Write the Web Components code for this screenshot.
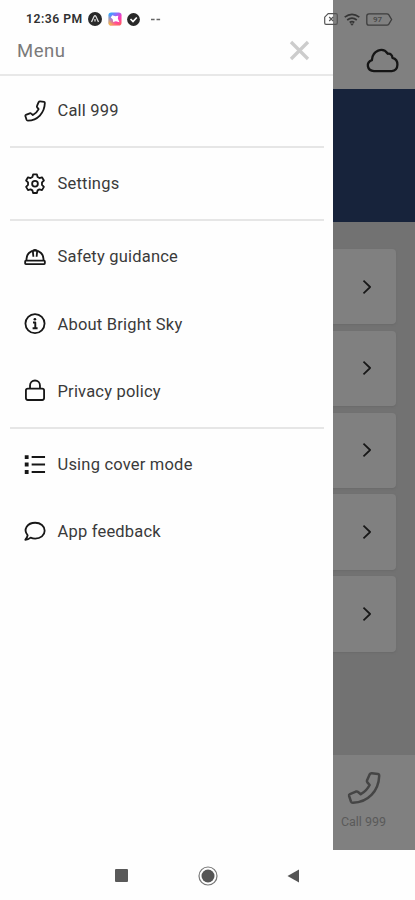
<!DOCTYPE html>
<html lang="en"><head><meta charset="utf-8"><title>Menu</title>
<style>body{margin:0;width:415px;height:900px;overflow:hidden;background:#fefefe;font-family:Roboto,sans-serif;color:#3a3a3a}</style></head>
<body><app-shell></app-shell>
<script>
const define=(name,html)=>customElements.define(name,class extends HTMLElement{
  constructor(){super();this.attachShadow({mode:'open'}).innerHTML=html}
});
const ICONS={
 phone:'<path d="M16.800 1.500 L21 2 Q21.900 2.200 21.800 3.200 C21.400 13.700 14.200 21.300 4 21.500 Q3 21.500 2.700 20.700 L1.400 16.800 Q1.200 16 2 15.600 L6 13.900 Q6.900 13.600 7.500 14.200 L9.300 15.700 Q13.300 13.500 15.300 9.500 L13.800 7.700 Q13.200 7 13.600 6.200 L15.300 2.300 Q15.800 1.400 16.800 1.500Z"/>',
 gear:'<path d="M9.5 1.500h4l.7 2.700 1.900 1.100 2.700-.8 2 3.400-2 2v2.600l2 2-2 3.400-2.700-.8-1.900 1.100-.7 2.700h-4l-.7-2.700-1.900-1.100-2.700.8-2-3.400 2-2v-2.600l-2-2 2-3.400 2.700.8 1.900-1.100z"/><circle cx="11.500" cy="11.200" r="3"/>',
 helmet:'<path d="M2.600 15.200v-1.600a8.900 8.900 0 0 1 17.800 0v1.600M9.200 5l.6 6.200M13.800 5l-.6 6.200M9.200 4.900q2.300-1.400 4.600 0"/><rect x="1.200" y="15.300" width="20.600" height="3.600" rx=".8"/>',
 info:'<circle cx="11.5" cy="11.1" r="10"/><path stroke-width="2" d="M9.400 9.900h2.400v6M9 15.900h5.200"/><circle cx="11.400" cy="6.500" r="1.400" fill="currentColor" stroke="none"/>',
 lock:'<rect x="2" y="9" width="19" height="11.9" rx="2"/><path d="M6.300 8.700V5.700a5.200 5.200 0 0 1 10.400 0v3"/>',
 list:'<path stroke-width="2" d="M8 3.200h14M8 11h14M8 18.800h14"/><path fill="currentColor" stroke="none" d="M.8 1.300h4v4h-4zM.8 9h4v4h-4zM.8 16.800h4v4h-4z"/>',
 chat:'<path d="M3.800 14.900C-1.300 8.800 3.600 1.800 11.700 1.800c5.600 0 9.900 3.500 9.900 8.300s-4.300 8.300-9.900 8.300c-1.800 0-3.400-.4-4.800-1C5.400 18.700 3.700 19.600 1.400 19.600 2.700 18.300 3.500 16.600 3.800 14.900Z"/>',
 cloud:'<path d="M5.600 18.900C.5 18.600-.2 12.800 4.100 11.200 4.500 4.700 11.600 1.700 15.200 6.800c1.800-.3 3.200.8 3.200 2.800C23.200 10.700 23.100 18.400 17.900 18.900Z"/>',
 chevron:'<path d="M7 3.500l8.500 8-8.500 8"/>',
 close:'<path d="M3 3l17 17M20 3L3 20"/>'
};
customElements.define('line-icon',class extends HTMLElement{
  constructor(){super();this.attachShadow({mode:'open'})}
  connectedCallback(){this.shadowRoot.innerHTML=`<style>:host{display:block;flex:none;width:24px;height:24px}svg{display:block;width:100%;height:100%;overflow:visible}</style>
  <svg viewBox="0 0 23 23" fill="none" stroke="currentColor" stroke-width="${this.getAttribute('weight')||1.9}" stroke-linejoin="round">${ICONS[this.getAttribute('name')]}</svg>`}
});
customElements.define('menu-item',class extends HTMLElement{
  constructor(){super();this.attachShadow({mode:'open'})}
  connectedCallback(){this.shadowRoot.innerHTML=`<style>:host{display:flex;align-items:center;height:67.200px;padding-left:23.500px;gap:12px;font-size:16.500px;letter-spacing:.2px;white-space:nowrap}
  line-icon{width:22px;height:22px;color:#171717}</style><line-icon name="${this.getAttribute('icon')}"></line-icon><span><slot></slot></span>`}
});
define('menu-group',`<style>:host{display:block;padding:2px 0}:host(:not(:last-child))::after{content:"";display:block;height:2px;margin:2px 9px 0 10px;background:#e6e6e6}</style><slot></slot>`);
define('menu-drawer',`<style>:host{display:block;width:332.500px;background:#fefefe}
 header{box-sizing:border-box;height:76px;border-bottom:2px solid #e8e8e8;display:flex;align-items:flex-end;justify-content:space-between;padding:0 22px 12px 17px;font-size:18.500px;letter-spacing:.5px;color:#7a7a7a}
 header span{margin-bottom:.5px}
 header line-icon{color:#ccc;width:23px;height:23px}
 menu-group{padding:2px 0 0}menu-group:first-of-type{padding-top:1px}</style>
 <header><span>Menu</span><line-icon name="close" weight="3.3"></line-icon></header>
 <menu-group><menu-item icon="phone">Call 999</menu-item></menu-group>
 <menu-group><menu-item icon="gear">Settings</menu-item></menu-group>
 <menu-group><menu-item icon="helmet">Safety guidance</menu-item><menu-item icon="info">About Bright Sky</menu-item><menu-item icon="lock">Privacy policy</menu-item></menu-group>
 <menu-group><menu-item icon="list">Using cover mode</menu-item><menu-item icon="chat">App feedback</menu-item></menu-group>`);
define('link-card',`<style>:host{display:flex;align-items:center;justify-content:flex-end;height:75.500px;box-sizing:border-box;padding-right:20.500px;background:#808080;border-radius:0 4px 4px 0;box-shadow:0 1px 2px #6a6a6a;color:#171717}line-icon{width:18px;height:18px}</style><line-icon name="chevron" weight="2.2"></line-icon>`);
define('dimmed-page',`<style>:host{display:flex;flex-direction:column;flex:1;background:#727272;overflow:hidden}
 .top{box-sizing:border-box;height:89px;background:#808080;padding:44px 0 0 33.500px;color:#151515}.top line-icon{width:33px;height:33px}
 .hero{height:133px;background:#17233b}
 .cards{flex:1;display:flex;flex-direction:column;gap:6.400px;padding:26.800px 19px 0 0}
 .tab{box-sizing:border-box;height:95px;background:#808080;width:82px;display:flex;flex-direction:column;align-items:center;padding:16px 20px 0 0;gap:9px;font-size:12.500px;line-height:16px;color:#5a5a5a;white-space:nowrap}.tab line-icon{width:34px;height:34px;color:#454545}</style>
 <div class="top"><line-icon name="cloud" weight="1.600"></line-icon></div><div class="hero"></div>
 <div class="cards"><link-card></link-card><link-card></link-card><link-card></link-card><link-card></link-card><link-card></link-card></div>
 <div class="tab"><line-icon name="phone" weight="1.700"></line-icon><span>Call 999</span></div>`);
define('status-bar',`<style>:host{display:flex;align-items:center;box-sizing:border-box;width:415px;height:38px;padding:0 22px 0 26px;font-size:12.200px;font-weight:600;letter-spacing:.5px;color:#303030}
 svg{display:block;flex:none}.left{display:flex;align-items:center;gap:5.500px;flex:1}.right{display:flex;align-items:center;gap:6px}.bat{display:grid;color:#4a4a4a}.bat>*{grid-area:1/1}.bat span{font-size:8px;line-height:13px;padding-left:7px;letter-spacing:0}</style>
 <div class="left"><span>12:36 PM</span>
 <svg width="14" height="14" viewBox="0 0 14 14"><circle cx="7" cy="7" r="7" fill="#292929"/><path d="M3.500 10l2.500-5.500q1-1.500 2 0L10.500 10M7 7v2.500" fill="none" stroke="#ddd" stroke-width="1.300"/></svg>
 <svg width="14" height="14" viewBox="0 0 15 14"><defs><linearGradient id="g" x2="1" y2="1"><stop stop-color="#18b9fa"/><stop offset=".35" stop-color="#8a70ff"/><stop offset=".65" stop-color="#ff37b5"/><stop offset="1" stop-color="#ff6b49"/></linearGradient><linearGradient id="y" x1="0" y1="1" x2="1" y2="0"><stop stop-color="#ffdf24"/><stop offset=".45" stop-color="#ffb020" stop-opacity="0"/></linearGradient></defs><rect x=".5" width="14" height="14" rx="3" fill="url(#g)"/><rect x=".5" width="14" height="14" rx="3" fill="url(#y)"/><path d="M4.500 3l3.500 1 3-.5-.5 3 1.800 4-3.800-1.200-3 1-.5-3-2-2z" fill="#fff"/></svg>
 <svg width="13" height="13" viewBox="0 0 13 13"><circle cx="6.500" cy="6.500" r="6.400" fill="#292929"/><path d="M3.500 6l2.500 2.500 3.800-4" fill="none" stroke="#fff" stroke-width="1.700"/></svg>
 <svg width="10" height="3" viewBox="0 0 10 3" style="margin-left:5px"><path d="M0 1.500h3.600M5.500 1.500h3.600" stroke="#666" stroke-width="1.500"/></svg></div>
 <div class="right"><svg width="14" height="12" viewBox="0 0 14 12" fill="none" stroke="#555" stroke-width="1.200"><path d="M4.200.7h7.800q1.300 0 1.300 1.300v8q0 1.300-1.300 1.300H2q-1.300 0-1.300-1.300V4.200Z"/><path d="M5.200 4l4 4M9.200 4l-4 4"/></svg>
 <svg width="16" height="13" viewBox="0 0 16 13" fill="none" stroke="#353535" stroke-width="1.700"><path d="M.7 4.200q7.300-5.800 14.600 0M3.200 7q4.800-3.700 9.600 0M5.700 9.500q2.300-1.700 4.600 0"/><path d="M6 10.500h4L8 12.800Z" fill="#353535" stroke="none"/></svg>
 <div class="bat"><svg width="27" height="13" viewBox="0 0 27 13" fill="none" stroke="#3d3d3d" stroke-width="1.300"><path d="M3 .8h18q1.200 0 1.700.8l2.900 4.900-2.900 4.900q-.5.800-1.700.8H3Q.8 12.200.8 10V3Q.8.800 3 .8Z"/></svg><span>97</span></div></div>`);
define('nav-bar',`<style>:host{display:flex;justify-content:space-between;align-items:center;box-sizing:border-box;height:50px;padding:1px 115px 0 115px;background:#fefefe}</style>
 <svg width="13" height="13"><rect width="13" height="13" rx="1" fill="#595959"/></svg>
 <svg width="20" height="20" style="margin-left:1px"><circle cx="10" cy="10" r="9" fill="none" stroke="#777" stroke-width="1.200"/><circle cx="10" cy="10" r="6.500" fill="#555"/></svg>
 <svg width="13" height="14"><path d="M12 .5v13L.5 7Z" fill="#555"/></svg>`);
define('app-shell',`<style>:host{display:flex;flex-direction:column;width:415px;height:900px;position:relative}.main{display:flex;height:850px}status-bar{position:absolute;top:0;left:0}</style>
 <div class="main"><menu-drawer></menu-drawer><dimmed-page></dimmed-page></div><nav-bar></nav-bar><status-bar></status-bar>`);
</script></body></html>
